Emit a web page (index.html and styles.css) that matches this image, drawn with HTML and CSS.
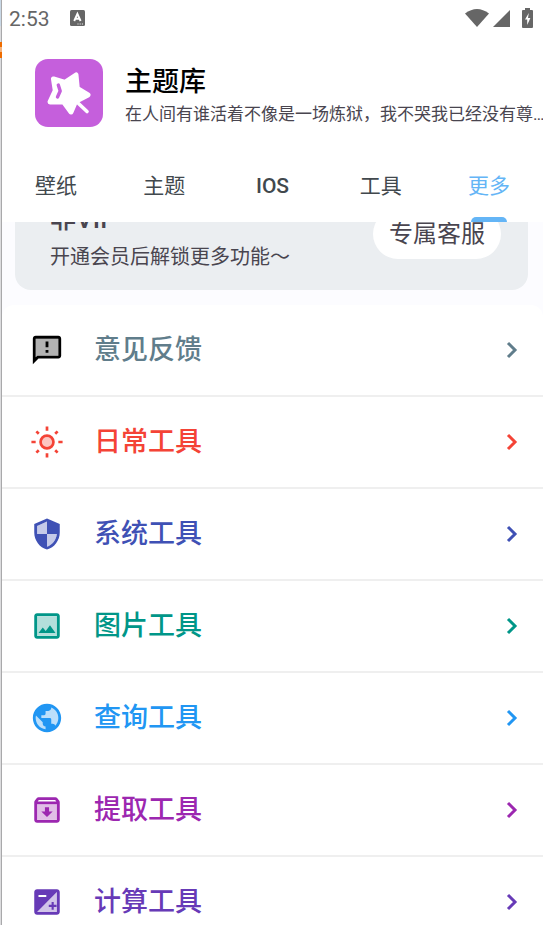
FILE: index.html
```html
<!DOCTYPE html>
<html lang="zh-CN">
<head>
<meta charset="utf-8">
<meta name="viewport" content="width=device-width, initial-scale=1">
<title>主题库</title>
<link rel="stylesheet" href="styles.css">
</head>
<body>
<div class="edge" aria-hidden="true"><span class="edge-blue"></span><span class="edge-orange"></span></div>
<div class="app">
  <header class="header">
    <div class="status">
      <span class="clock">2:53</span>
      <svg class="status-app" viewBox="0 0 15 16"><rect width="15" height="16" rx="1.500" fill="#666"/><path d="M4.200 11 7.400 3.800 10.600 11M5.400 8.800h4" fill="none" stroke="#fff" stroke-width="1.900"/><path d="M7.500 14h1M9.700 14h1M11.900 14h1" stroke="#fff"/></svg>
      <span class="status-right">
        <svg class="wifi" viewBox="0 0 24 18"><path d="M0 4.500Q12-4.500 24 4.500L12 18Z"/></svg>
        <svg class="signal" viewBox="0 0 17 17"><path d="M17 0v17H0z"/></svg>
        <svg class="battery" viewBox="0 0 11 20"><path d="M3 0h5v2h2q1 0 1 1v16q0 1-1 1H1q-1 0-1-1V3q0-1 1-1h2z"/><path d="M6.800 5 3 11.500h2.200V17L8.400 10H6z" fill="#fff"/></svg>
      </span>
    </div>
    <div class="brand">
      <svg class="logo" viewBox="0 0 68 68">
        <rect width="68" height="68" rx="13" fill="#c55fdc"/>
        <path d="M41 16 42.300 29.500 53 36 40.500 42.500 36 53 28.500 42.800 15 43 20.300 31.500 18.500 20 30 23.300Z" fill="#fff" stroke="#fff" stroke-width="5" stroke-linejoin="round"/>
        <path d="M23.300 26 25.200 32 22.500 38" fill="none" stroke="#c55fdc" stroke-width="3.400" stroke-linecap="round" stroke-linejoin="round"/>
        <path d="m43.500 44.500 8.500 8" stroke="#fff" stroke-width="3.600" stroke-linecap="round"/>
      </svg>
      <div class="brand-text">
        <h1>主题库</h1>
        <p>在人间有谁活着不像是一场炼狱，我不哭我已经没有尊…</p>
      </div>
    </div>
    <nav class="tabs">
      <a href="#wallpaper">壁纸</a>
      <a href="#theme">主题</a>
      <a href="#ios" class="latin">IOS</a>
      <a href="#tools">工具</a>
      <a href="#more" class="active" aria-current="page">更多</a>
    </nav>
  </header>
  <main class="content">
    <section class="vip">
      <div class="vip-text">
        <h2>非VIP</h2>
        <p>开通会员后解锁更多功能～</p>
      </div>
      <button type="button" class="service">专属客服</button>
    </section>
    <nav class="list">
      <a href="#feedback" class="row slate">
        <svg class="icon black" viewBox="0 0 24 24"><path opacity=".3" d="M4 17.170 5.170 16H20V4H4z"/><path d="M20 2H4c-1.100 0-2 .9-2 2v18l4-4h14c1.100 0 2-.9 2-2V4c0-1.100-.9-2-2-2zm0 14H5.170L4 17.170V4h16v12zm-9-4h2v2h-2zm0-6h2v4h-2z"/></svg>
        <span>意见反馈</span>
        <svg class="chevron" viewBox="0 0 12 18"><path d="m2 2 7 7-7 7"/></svg>
      </a>
      <a href="#daily" class="row red">
        <svg class="icon" viewBox="0 0 24 24"><circle cx="12" cy="12" r="5" opacity=".3"/><path d="M12 6.500a5.500 5.500 0 1 0 0 11 5.500 5.500 0 0 0 0-11zm0 1.900a3.600 3.600 0 1 1 0 7.200 3.600 3.600 0 0 1 0-7.200z"/><path d="M12 1v3M12 20v3M1 12h3M20 12h3M4.500 4.500l1.700 1.700M17.800 17.800l1.700 1.700M4.500 19.500l1.700-1.700M17.800 6.200l1.700-1.700" stroke="currentColor" stroke-width="1.900"/></svg>
        <span>日常工具</span>
        <svg class="chevron" viewBox="0 0 12 18"><path d="m2 2 7 7-7 7"/></svg>
      </a>
      <a href="#system" class="row indigo">
        <svg class="icon" viewBox="0 0 24 24"><path opacity=".3" d="M12 3.190 5 6.300V12h7zM12 12v8.930c3.720-1.150 6.470-4.820 7-8.930z"/><path d="M12 1 3 5v6c0 5.550 3.840 10.740 9 12 5.160-1.260 9-6.450 9-12V5l-9-4zm7 11c-.53 4.110-3.280 7.780-7 8.930V12H5V6.300l7-3.110V12h7z"/></svg>
        <span>系统工具</span>
        <svg class="chevron" viewBox="0 0 12 18"><path d="m2 2 7 7-7 7"/></svg>
      </a>
      <a href="#image" class="row teal">
        <svg class="icon" viewBox="0 0 24 24"><path opacity=".3" d="M5 5h14v14H5z"/><path d="M19 3H5c-1.100 0-2 .9-2 2v14c0 1.100.9 2 2 2h14c1.100 0 2-.9 2-2V5c0-1.100-.9-2-2-2zm0 16H5V5h14v14zM6 17l3-4 2.100 2.500 3-4L18 17z"/></svg>
        <span>图片工具</span>
        <svg class="chevron" viewBox="0 0 12 18"><path d="m2 2 7 7-7 7"/></svg>
      </a>
      <a href="#query" class="row blue">
        <svg class="icon" viewBox="0 0 24 24"><circle cx="12" cy="12" r="9" opacity=".3"/><path d="M12 2C6.480 2 2 6.480 2 12s4.480 10 10 10 10-4.480 10-10S17.520 2 12 2zM4 12c0-.61.08-1.210.21-1.780L8.990 15v1c0 1.100.9 2 2 2v1.930C7.060 19.430 4 16.070 4 12zm13.890 5.400c-.26-.81-1-1.400-1.900-1.400h-1v-3c0-.55-.45-1-1-1h-6v-2h2c.55 0 1-.45 1-1V7h2c1.100 0 2-.9 2-2v-.41C17.920 5.770 20 8.650 20 12c0 2.080-.81 3.980-2.110 5.400z"/></svg>
        <span>查询工具</span>
        <svg class="chevron" viewBox="0 0 12 18"><path d="m2 2 7 7-7 7"/></svg>
      </a>
      <a href="#extract" class="row purple">
        <svg class="icon" viewBox="0 0 24 24"><path opacity=".3" d="M5 8h14v11H5z"/><path fill-rule="evenodd" d="m20.540 5.230-1.390-1.680C18.880 3.210 18.470 3 18 3H6c-.47 0-.88.21-1.160.55L3.460 5.230C3.170 5.570 3 6.020 3 6.500V19c0 1.100.9 2 2 2h14c1.100 0 2-.9 2-2V6.500c0-.48-.17-.93-.46-1.270zM6.240 5h11.520l.83 1H5.420l.82-1zM5 19V8h14v11H5z"/><path d="M13.450 10h-2.900v3H8l4 4 4-4h-2.550z"/></svg>
        <span>提取工具</span>
        <svg class="chevron" viewBox="0 0 12 18"><path d="m2 2 7 7-7 7"/></svg>
      </a>
      <a href="#calculate" class="row violet">
        <svg class="icon" viewBox="0 0 24 24"><path opacity=".3" d="M19 19V5L5 19z"/><path fill-rule="evenodd" d="M19 3H5c-1.100 0-2 .9-2 2v14c0 1.100.9 2 2 2h14c1.100 0 2-.9 2-2V5c0-1.100-.9-2-2-2zm0 16H5L19 5v14zM6 7h5.500v1.500H6z"/><path d="M15.250 17.500v-2h-2V14h2v-2h1.500v2h2v1.500h-2v2z"/></svg>
        <span>计算工具</span>
        <svg class="chevron" viewBox="0 0 12 18"><path d="m2 2 7 7-7 7"/></svg>
      </a>
    </nav>
  </main>
</div>
</body>
</html>
```
FILE: styles.css
```css
* { box-sizing: border-box; }
body {
  margin: 0;
  display: flex;
  height: 100vh;
  overflow: hidden;
  font-family: Roboto, "Noto Sans CJK SC", sans-serif;
  color: #49454f;
  background: #fff;
}
h1, h2, p { margin: 0; }
a { color: inherit; text-decoration: none; }
svg { flex: none; display: block; }
.edge {
  flex: none;
  width: 2px;
  background: #dcdcde;
  border-right: 1px solid #a9a9ab;
  display: flex;
  flex-direction: column;
}
.edge-blue { height: 26px; background: #c9d8e6; }
.edge-orange {
  height: 16px;
  width: 2px;
  margin-top: 16px;
  background: linear-gradient(#ef6c00 0 5px, #f3b27c 5px 10px, #ef6c00 10px);
}
.app { flex: 1; min-width: 0; display: flex; flex-direction: column; }
.header { flex: none; background: #fff; }

.status {
  display: flex;
  align-items: center;
  height: 36px;
  padding: 0 10px 0 7px;
  color: #666;
}
.clock { font-size: 21px; line-height: 24px; padding-top: 2px; }
.status-app { width: 15px; height: 16px; margin-left: 20px; }
.status-right { display: flex; align-items: center; margin-left: auto; fill: #666; }
.wifi { width: 24px; height: 18px; }
.signal { width: 17px; height: 17px; margin-left: 4px; }
.battery { width: 11px; height: 20px; margin-left: 12px; }

.brand { display: flex; align-items: center; padding: 22px 0 22px 33px; }
.logo { width: 68px; height: 68px; margin-right: 22px; }
.brand-text { flex: 1; min-width: 0; padding-top: 6px; }
.brand h1 { font-size: 27px; line-height: 36px; font-weight: 500; color: #000; }
.brand p { font-size: 17px; line-height: 28px; white-space: nowrap; overflow: hidden; }

.tabs { display: flex; height: 72px; color: #41484d; }
.tabs a {
  flex: 1;
  text-align: center;
  font-size: 21px;
  line-height: 72px;
}
.tabs .latin { font-weight: 500; }
.tabs .active {
  display: flex;
  justify-content: center;
  position: relative;
  color: #64b5f6;
}
.tabs .active::after {
  content: "";
  position: absolute;
  bottom: 0;
  width: 36px;
  height: 5px;
  border-radius: 5px 5px 0 0;
  background: #64b5f6;
}

.content { flex: 1; min-height: 0; overflow: hidden; background: #fcfcff; }
.vip {
  display: flex;
  align-items: center;
  justify-content: space-between;
  height: 112px;
  margin: -44px 15px 15px 13px;
  padding: 0 27px 0 35px;
  border-radius: 16px;
  background: #ebeef1;
}
.vip-text { padding-top: 10px; }
.vip h2 { font-size: 26px; line-height: 36px; font-weight: 500; }
.vip p { font-size: 20px; line-height: 40px; }
.service {
  height: 50px;
  padding: 0 16px;
  border: 0;
  border-radius: 25px;
  background: #fff;
  color: inherit;
  font: inherit;
  font-size: 24px;
  line-height: 48px;
}
.list { background: #fff; border-radius: 12px 12px 0 0; }
.row {
  display: flex;
  align-items: center;
  height: 92px;
  padding: 0 25px 0 28px;
  border-bottom: 2px solid #efefef;
  font-size: 27px;
  line-height: 36px;
  font-weight: 500;
}
.row span { flex: 1; margin-left: 30px; }
.icon { width: 34px; height: 34px; fill: currentColor; }
.icon.black { color: #000; }
.chevron { width: 12px; height: 18px; fill: none; stroke: currentColor; stroke-width: 3; }
.slate { color: #607d8b; }
.red { color: #f44336; }
.indigo { color: #3f51b5; }
.teal { color: #009688; }
.blue { color: #2196f3; }
.purple { color: #9c27b0; }
.violet { color: #673ab7; }
```
